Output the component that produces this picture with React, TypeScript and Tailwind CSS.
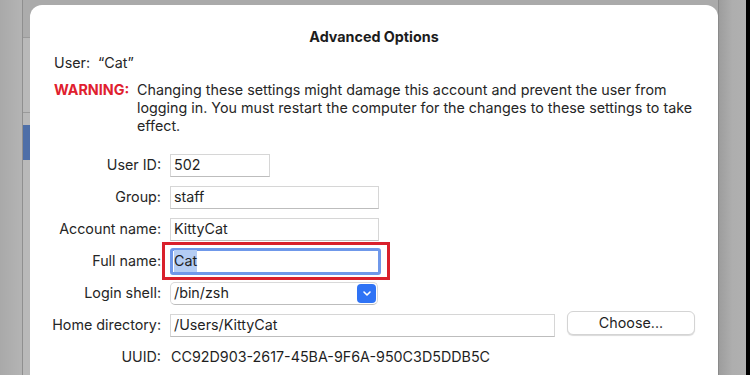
import React from "react";

const font = { fontFamily: "Inter, 'Noto Sans', sans-serif" };

function Field({ label, children }: { label: string; children: React.ReactNode }) {
  return (
    <div className="flex items-center h-[32px]">
      <div className="w-[132px] pr-[1px] text-right text-[14.3px] text-[#262626] shrink-0">{label}</div>
      <div className="ml-[8px] flex items-center">{children}</div>
    </div>
  );
}

function Input({ value, w }: { value: string; w: string }) {
  return (
    <div className={`${w} h-[23px] bg-white border border-[#d6d6d6] border-b-[#bdbdbd] flex items-center pl-[3px] text-[14.3px] text-[#1f1f1f]`}>
      {value}
    </div>
  );
}

export default function App() {
  return (
    <div className="w-[750px] h-[375px] overflow-hidden flex bg-[#aaaaaa]" style={font}>
      {/* left background window */}
      <div className="w-[30px] h-full flex shrink-0">
        <div className="w-[22px] h-full bg-gradient-to-r from-[#a9a9a9] to-[#b4b4b4] pt-[5px]"></div>
        <div className="w-[8px] h-full border-l border-[#8f8f8f] bg-[#b9b9b9] flex flex-col">
          <div className="h-[37px] bg-[#acacac]"></div>
          <div className="h-[75px] border-t border-[#9a9a9a]"></div>
          <div className="h-[13px] border-t border-[#9a9a9a]"></div>
          <div className="h-[35px] bg-[#4e6fa8]"></div>
          <div className="flex-1"></div>
        </div>
      </div>
      {/* dialog */}
      <div className="w-[688px] shrink-0 flex flex-col pt-[5px]">
        <div className="flex-1 bg-white rounded-t-[12px] pt-[23px] pl-[24px] text-[#262626]">
          <div className="text-center text-[14.3px] font-bold text-[#1c1c1c] pr-[24px] leading-[17px]">Advanced Options</div>
          <div className="mt-[9px] text-[14.3px] leading-[17px]">User:&nbsp;&nbsp;“Cat”</div>
          <div className="mt-[10px] flex text-[14.3px] leading-[18px]">
            <div className="w-[83px] shrink-0 font-bold text-[#e0202e]">WARNING:</div>
            <div>
              Changing these settings might damage this account and prevent the user from
              <br />
              logging in. You must restart the computer for the changes to these settings to take
              <br />
              effect.
            </div>
          </div>
          <div className="mt-[14px] ml-[-24px] flex flex-col">
            <Field label="User ID:">
              <Input value="502" w="w-[100px]" />
            </Field>
            <Field label="Group:">
              <Input value="staff" w="w-[209px]" />
            </Field>
            <Field label="Account name:">
              <Input value="KittyCat" w="w-[209px]" />
            </Field>
            <div className="flex items-center h-[32px]">
              <div className="w-[132px] pr-[1px] text-right text-[14.3px] text-[#262626] shrink-0">Full name:</div>
              <div className="relative">
                <div className="w-[228px] h-[38px] border-[3px] border-[#d9202c] flex items-center pl-[5px]">
                  <div className="w-[211px] h-[27px] border-[3px] border-[#6f98ea] rounded-[3px] bg-white flex items-center pl-[1px] text-[14.3px] text-[#1f1f1f]">
                    <span className="bg-[#b4cdf4]">Cat</span>
                  </div>
                </div>
              </div>
            </div>
            <Field label="Login shell:">
              <div className="w-[208px] h-[23px] bg-white border border-[#d9d9d9] border-b-[#bdbdbd] rounded-[5px] flex items-center pl-[3px] pr-[1px] text-[14.3px] text-[#1f1f1f] justify-between">
                <span>/bin/zsh</span>
                <div className="w-[19px] h-[19px] rounded-[4px] bg-[#2f73f5] flex items-center justify-center">
                  <svg width="10" height="7" viewBox="0 0 10 7">
                    <path d="M2 2 L5 5 L8 2" stroke="white" strokeWidth="1.6" fill="none" strokeLinecap="round" strokeLinejoin="round" />
                  </svg>
                </div>
              </div>
            </Field>
            <div className="flex items-center h-[32px]">
              <div className="w-[132px] pr-[1px] text-right text-[14.3px] text-[#262626] shrink-0">Home directory:</div>
              <div className="ml-[8px] flex items-center">
                <Input value="/Users/KittyCat" w="w-[385px]" />
                <div className="ml-[12px] w-[128px] h-[24px] mt-[-4px] rounded-[6px] bg-white border border-[#d4d4d4] shadow-[0_1px_1px_rgba(0,0,0,0.15)] flex items-center justify-center text-[14.3px] text-[#1f1f1f]">
                  Choose...
                </div>
              </div>
            </div>
            <Field label="UUID:">
              <div className="pl-[1px] text-[14.3px] text-[#1f1f1f]">CC92D903-2617-45BA-9F6A-950C3D5DDB5C</div>
            </Field>
          </div>
        </div>
      </div>
      {/* right background */}
      <div className="w-[28px] shrink-0 h-full bg-gradient-to-r from-[#9d9d9d] via-[#aeaeae] to-[#b0b0b0] border-l border-[#8a8a8a]"></div>
      <div className="w-[4px] shrink-0 h-full bg-black"></div>
    </div>
  );
}
